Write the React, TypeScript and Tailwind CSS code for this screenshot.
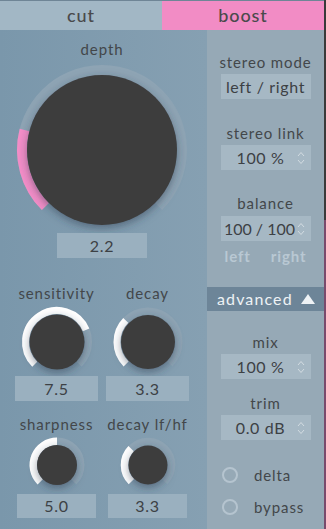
import React from 'react';

const font = { fontFamily: 'Lato, "Open Sans", sans-serif' };

// point on a circle, angle in degrees clockwise from 12 o'clock
const pt = (cx: number, cy: number, r: number, a: number) => {
  const rad = (a * Math.PI) / 180;
  return [cx + r * Math.sin(rad), cy - r * Math.cos(rad)];
};

const arc = (cx: number, cy: number, r: number, a0: number, a1: number) => {
  const [x0, y0] = pt(cx, cy, r, a0);
  const [x1, y1] = pt(cx, cy, r, a1);
  const large = a1 - a0 > 180 ? 1 : 0;
  return `M ${x0} ${y0} A ${r} ${r} 0 ${large} 1 ${x1} ${y1}`;
};

type KnobProps = {
  size: number;
  height: number;
  cy: number;
  inner: number;
  ring: number;
  width: number;
  value: number;
  color: string;
  id: string;
};

const Knob: React.FC<KnobProps> = ({ size, height, cy, inner, ring, width, value, color, id }) => {
  const cx = size / 2;
  const end = -135 + (value / 10) * 270;
  return (
    <svg width={size} height={height} viewBox={`0 0 ${size} ${height}`} className="block">
      <defs>
        <filter id={id} x="-30%" y="-30%" width="160%" height="160%">
          <feDropShadow dx="0" dy="3" stdDeviation="4" floodColor="#27394a" floodOpacity="0.5" />
        </filter>
      </defs>
      <path d={arc(cx, cy, ring, -135, 135)} stroke="#8ea4b4" strokeWidth={width} fill="none" />
      <path d={arc(cx, cy, ring, -135, end)} stroke={color} strokeWidth={width} fill="none" />
      <circle cx={cx} cy={cy} r={inner} fill="#3d3d3d" filter={`url(#${id})`} />
    </svg>
  );
};

const Label = ({ children }: { children: React.ReactNode }) => (
  <div className="h-[20px] leading-[20px] text-[15px] tracking-[0.06em] text-[#43474a] text-center whitespace-nowrap">
    {children}
  </div>
);

const ValueBox = ({ children, w, h = 25 }: { children: React.ReactNode; w: string; h?: number }) => (
  <div
    className={`${w} flex items-center justify-center bg-[#9ab0bf] text-[16px] tracking-[0.04em] text-[#3d4145]`}
    style={{ height: h }}
  >
    {children}
  </div>
);

const Spinner = () => (
  <svg width="8" height="16" viewBox="0 0 8 16" className="absolute right-[6px] top-1/2 -translate-y-1/2">
    <path d="M1 6 L4 2.5 L7 6" stroke="#d3dce2" strokeWidth="1" fill="none" />
    <path d="M1 10 L4 13.5 L7 10" stroke="#d3dce2" strokeWidth="1" fill="none" />
  </svg>
);

const Field = ({ children, spin, pr }: { children: React.ReactNode; spin?: boolean; pr?: string }) => (
  <div className={`relative w-[90px] h-[25px] bg-[#a6b8c4] flex items-center justify-center text-[16px] tracking-[0.04em] text-[#3d4145] ${pr || ''}`}>
    {children}
    {spin && <Spinner />}
  </div>
);

const Radio = ({ label }: { label: string }) => (
  <div className="flex items-center h-[20px] w-full pl-[14px]">
    <svg width="18" height="18" viewBox="0 0 18 18">
      <circle cx="9" cy="9" r="7" stroke="#b5c4cf" strokeWidth="2" fill="none" />
    </svg>
    <span className="ml-[15px] text-[15px] tracking-[0.06em] text-[#43474a]">{label}</span>
  </div>
);

export default function App() {
  return (
    <div className="w-[326px] h-[529px] flex bg-[#3a3a3a] overflow-hidden" style={font}>
      <div className="w-[324px] h-full flex flex-col border-t border-[#6f8596]">
        {/* tabs */}
        <div className="flex h-[29px] text-[18px] font-medium tracking-[0.05em] text-[#4a4a4c]">
          <div className="w-[162px] bg-[#a2b7c5] flex items-center justify-center">cut</div>
          <div className="w-[162px] bg-[#f28cc5] flex items-center justify-center">boost</div>
        </div>

        <div className="flex flex-1">
          {/* left panel */}
          <div className="w-[207px] flex flex-col items-center pr-[3px] bg-gradient-to-r from-[#7a97ab] to-[#86a0b2]">
            <div className="mt-[9px]">
              <Label>depth</Label>
            </div>
            <Knob id="k0" size={180} height={174} cy={91} inner={75} ring={80} width={10} value={2.2} color="#f48ec8" />
            <ValueBox w="w-[90px]">2.2</ValueBox>

            <div className="grid grid-cols-2 w-full px-[11px] mt-[25px]">
              <div className="flex flex-col items-center">
                <Label>sensitivity</Label>
                <Knob id="k1" size={76} height={73} cy={39} inner={27.5} ring={31.5} width={7} value={7.5} color="#ffffff" />
                <ValueBox w="w-[83px]">7.5</ValueBox>
              </div>
              <div className="flex flex-col items-center">
                <Label>decay</Label>
                <Knob id="k2" size={76} height={73} cy={39} inner={27} ring={31} width={7} value={3.3} color="#ffffff" />
                <ValueBox w="w-[83px]">3.3</ValueBox>
              </div>
              <div className="flex flex-col items-center mt-[13px]">
                <Label>sharpness</Label>
                <Knob id="k3" size={64} height={60} cy={31} inner={20} ring={23.75} width={7.5} value={5} color="#ffffff" />
                <ValueBox w="w-[79px]" h={24}>5.0</ValueBox>
              </div>
              <div className="flex flex-col items-center mt-[13px]">
                <Label>decay lf/hf</Label>
                <Knob id="k4" size={64} height={60} cy={31} inner={19.5} ring={23.5} width={7.5} value={3.3} color="#ffffff" />
                <ValueBox w="w-[79px]" h={24}>3.3</ValueBox>
              </div>
            </div>
          </div>

          {/* right panel */}
          <div className="w-[117px] flex flex-col items-center bg-[#96a9b6]">
            <div className="mt-[22px]">
              <Label>stereo mode</Label>
            </div>
            <div className="mt-[2px]">
              <Field>left / right</Field>
            </div>
            <div className="mt-[24px]">
              <Label>stereo link</Label>
            </div>
            <div className="mt-[2px]">
              <Field spin pr="pr-[10px]">100 %</Field>
            </div>
            <div className="mt-[23px]">
              <Label>balance</Label>
            </div>
            <div className="mt-[3px]">
              <Field spin pr="pr-[12px] tracking-normal">100 / 100</Field>
            </div>
            <div className="mt-[5px] w-[90px] flex justify-between px-[4px] text-[15px] font-bold tracking-[0.06em] text-[#b9c8d3] leading-[20px]">
              <span>left</span>
              <span>right</span>
            </div>

            <div className="mt-[21px] w-full h-[24px] bg-[#6d8598] flex items-center pl-[10px] text-[16px] tracking-[0.07em] text-[#eef2f5]">
              <span>advanced</span>
              <svg width="14" height="10" viewBox="0 0 14 10" className="ml-[8px]">
                <path d="M0 10 L7 0 L14 10 Z" fill="#eef2f5" />
              </svg>
            </div>

            <div className="mt-[21px]">
              <Label>mix</Label>
            </div>
            <div className="mt-[2px]">
              <Field spin pr="pr-[10px]">100 %</Field>
            </div>
            <div className="mt-[14px]">
              <Label>trim</Label>
            </div>
            <div className="mt-[2px]">
              <Field spin pr="pr-[10px]">0.0 dB</Field>
            </div>
            <div className="mt-[25px] w-full">
              <Radio label="delta" />
            </div>
            <div className="mt-[12px] w-full">
              <Radio label="bypass" />
            </div>
          </div>
        </div>
      </div>
      <div className="w-[2px] h-full flex flex-col">
        <div className="h-[220px] bg-[#3a3a3a]" />
        <div className="flex-1 bg-[#7a4a6c]" />
      </div>
    </div>
  );
}
